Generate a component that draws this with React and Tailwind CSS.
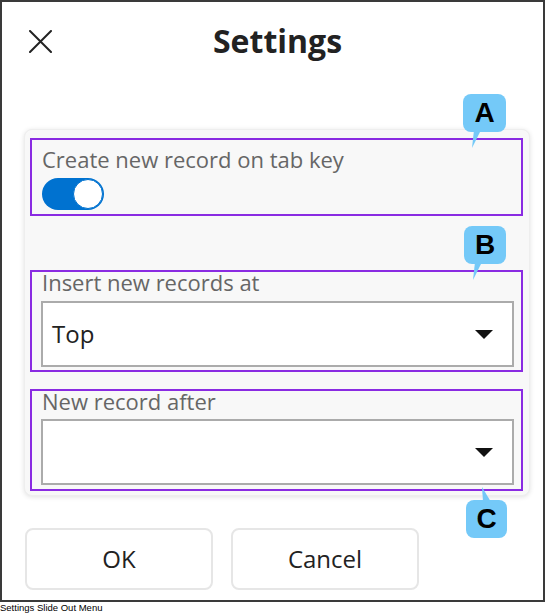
import React from "react";

function Caret() {
  return (
    <svg width="18" height="9" viewBox="0 0 18 9" className="shrink-0">
      <polygon points="0,0 18,0 9,9" fill="#111" />
    </svg>
  );
}

function Callout({ letter, box, tail }) {
  return (
    <>
      <svg className="absolute left-0 top-0 pointer-events-none" width="545" height="613">
        <polygon points={tail} fill="#74c9f8" />
      </svg>
      <div
        className="absolute flex items-center justify-center rounded-[8px] bg-[#74c9f8] text-black font-bold text-[28px] leading-none font-['Liberation_Sans',Arial,sans-serif]"
        style={box}
      >
        {letter}
      </div>
    </>
  );
}

function Select({ value }) {
  return (
    <div className="h-[66px] w-full border-2 border-[#ababab] bg-white flex items-center pl-[9px] pr-[19px]">
      <span className="flex-1 text-[24px] text-[#222]">{value}</span>
      <Caret />
    </div>
  );
}

export default function App() {
  return (
    <div className="relative w-[545px] h-[613px] bg-white font-['Open_Sans',sans-serif]">
      <div className="h-[602px] border-2 border-[#3a3a3a] flex flex-col">
        {/* header */}
        <div className="h-[78px] flex items-center pl-[27px]">
          <svg width="23" height="23" viewBox="0 0 23 23" className="shrink-0">
            <path d="M1 1 L22 22 M22 1 L1 22" stroke="#222" strokeWidth="2" strokeLinecap="round" />
          </svg>
          <div className="flex-1 text-center pr-[40px] text-[32px] font-bold text-[#222]">Settings</div>
        </div>

        {/* settings card */}
        <div className="mt-[49px] ml-[22px] w-[506px] rounded-[8px] bg-[#f8f8f8] border border-[#eeeeee] shadow-[0_1px_5px_rgba(0,0,0,0.12)] pt-[8px] pb-[4px] pl-[5px] pr-[6px] flex flex-col">
          <div className="h-[78px] border-2 border-[#8a2be2] pl-[10px] pt-[9px]">
            <div className="text-[22px] leading-[20px] text-[#666]">Create new record on tab key</div>
            <div className="mt-[9px] w-[62px] h-[32px] rounded-full bg-[#0072d0] flex items-center justify-end pr-px">
              <div className="w-[30px] h-[30px] rounded-full bg-white border-[1.5px] border-[#0072d0]" />
            </div>
          </div>

          <div className="mt-[54px] h-[102px] border-2 border-[#8a2be2] pl-[9px] pr-[7px]">
            <div className="pl-px text-[22px] leading-[20px] text-[#666]">Insert new records at</div>
            <div className="mt-[9px]">
              <Select value="Top" />
            </div>
          </div>

          <div className="mt-[17px] h-[102px] border-2 border-[#8a2be2] pl-[9px] pr-[7px]">
            <div className="pl-px text-[22px] leading-[20px] text-[#666]">New record after</div>
            <div className="mt-[8px]">
              <Select value="" />
            </div>
          </div>
        </div>

        {/* actions */}
        <div className="mt-[32px] ml-[23px] flex gap-[18px]">
          <button className="w-[188px] h-[62px] rounded-[8px] border-2 border-[#e6e6e6] bg-white text-[24px] text-[#222]">OK</button>
          <button className="w-[188px] h-[62px] rounded-[8px] border-2 border-[#e6e6e6] bg-white text-[24px] text-[#222]">Cancel</button>
        </div>
      </div>
      <div className="text-[9.5px] leading-[11px] text-black font-['Liberation_Sans',Arial,sans-serif]">Settings Slide Out Menu</div>

      <Callout letter="A" box={{ left: 463, top: 94, width: 43, height: 38 }} tail="474,130 481,130 472,148" />
      <Callout letter="B" box={{ left: 464, top: 226, width: 42, height: 38 }} tail="475,262 482,262 473,280" />
      <Callout letter="C" box={{ left: 466, top: 500, width: 41, height: 38 }} tail="482,487 483,502 491,502" />
    </div>
  );
}
